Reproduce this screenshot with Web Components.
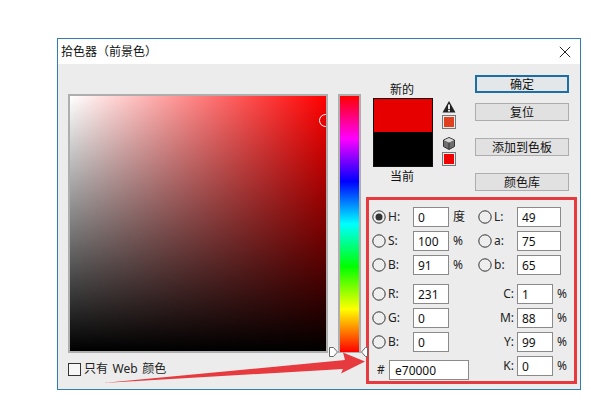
<!DOCTYPE html>
<html lang="zh"><head><meta charset="utf-8"><title>拾色器</title>
<style>
html,body{margin:0;background:#fff;}
body{width:591px;height:412px;overflow:hidden;padding:38px 0 0 57px;box-sizing:border-box;position:relative;font:12px/16px "Noto Sans","Noto Sans CJK SC",sans-serif;color:#111;}
</style></head><body>
<cp-dialog heading="拾色器（前景色）">
  <div slot="left" style="display:contents">
    <cp-field-square></cp-field-square>
    <cp-hue></cp-hue>
  </div>
  <cp-check slot="check">只有 Web 颜色</cp-check>
  <cp-preview slot="preview"></cp-preview>
  <cp-btn slot="btn" primary>确定</cp-btn>
  <cp-btn slot="btn" style="margin-top:10px">复位</cp-btn>
  <cp-btn slot="btn" style="margin-top:17px">添加到色板</cp-btn>
  <cp-btn slot="btn" style="margin-top:17px">颜色库</cp-btn>
  <cp-values slot="values"></cp-values>
</cp-dialog>
<cp-arrow></cp-arrow>
<script>
function def(name,css,html){
  customElements.define(name,class extends HTMLElement{
    connectedCallback(){
      if(this.shadowRoot)return;
      const r=this.attachShadow({mode:'open'});
      r.innerHTML='<style>'+css+'</style>'+(typeof html==='function'?html(this):html);
    }
  });
}
def('cp-dialog',`
:host{display:block;width:524px;border:1px solid #2f7fb5;box-sizing:border-box;background:#ececec}
.title{height:25px;background:#fff;display:flex;align-items:center;justify-content:space-between;padding:0 9px 0 3px;font-size:12px;line-height:25px;color:#111}
.title svg{display:block}
.body{display:flex;gap:5px;padding:0 0 5px 10px}
.left{padding-top:30px;width:293px}
.row{display:flex;gap:10px}
.right{padding-top:11px;width:211px}
.top{display:flex;height:122px}
.btns{margin-left:19px;width:94px;display:flex;flex-direction:column}
`,h=>`<div class="title"><span>${h.getAttribute('heading')}</span><svg width="12" height="12" viewBox="0 0 12 12"><path d="M.8.8l10.4 10.4M11.2.8L.8 11.2" stroke="#222" stroke-width="1" fill="none"/></svg></div>
<div class="body"><div class="left"><div class="row"><slot name="left"></slot></div><slot name="check"></slot></div>
<div class="right"><div class="top"><slot name="preview"></slot><div class="btns"><slot name="btn"></slot></div></div><slot name="values"></slot></div></div>`);

def('cp-field-square',`
:host{display:block;position:relative;width:260px;height:259px;box-sizing:border-box;border:2px solid #aeaeae;background:linear-gradient(to bottom,rgba(0,0,0,0),#000),linear-gradient(to right,#fff,#f00)}
.clip{position:absolute;inset:0;overflow:hidden}
.ring{position:absolute;left:249px;top:18px;width:13px;height:13px;box-sizing:border-box;border:1.5px solid #fff;border-radius:50%}
.tri{position:absolute;left:259px;top:251px}
`,`<div class="clip"><div class="ring"></div></div><svg class="tri" width="9" height="10" viewBox="0 0 9 10"><path d="M.5.5H4.500L8.500 5 4.500 9.500H.5z" fill="#fff" stroke="#666" stroke-width="1"/></svg>`);

def('cp-hue',`
:host{display:block;position:relative;width:23px;height:259px;box-sizing:border-box;border:2px solid #aeaeae;border-bottom-width:1px;background:linear-gradient(to bottom,#f00,#f0f 16.67%,#00f 33.33%,#0ff 50%,#0f0 66.67%,#ff0 83.33%,#f00)}
svg{position:absolute;left:21px;top:251px}
`,`<svg width="7" height="10" viewBox="0 0 7 10"><path d="M6.500.5H4.500L.5 5l4 4.500h2z" fill="#fff" stroke="#666" stroke-width="1"/></svg>`);

def('cp-check',`
:host{display:flex;align-items:center;margin-top:9px;height:14px;gap:3px;font-size:12px;line-height:14px;color:#222;word-spacing:1.5px}
i{display:block;width:13px;height:13px;box-sizing:border-box;border:1px solid #333;background:#f6f6f6}
`,`<i></i><slot></slot>`);

def('cp-preview',`
:host{display:flex;margin-left:7px}
.c{width:60px;padding-top:7px;text-align:center;font-size:12px;line-height:16px}
.t{padding-right:2px}
.sw{height:69px;box-sizing:border-box;border:1px solid #111;background:linear-gradient(#e70000 0 50%,#000 50%)}
.l2{margin-top:2px}
.i{margin-left:9px;width:14px;padding-top:26px;display:flex;flex-direction:column}
.i svg{display:block}
.s{width:14px;height:14px;box-sizing:border-box;border:1px solid #777;box-shadow:inset 0 0 0 1px #eee}
`,`<div class="c"><div class="t">新的</div><div class="sw"></div><div class="l2 t">当前</div></div>
<div class="i"><svg width="14" height="12" viewBox="0 0 14 12"><path d="M7 0L13.500 11.500H.5z" fill="#222"/><path d="M6.100 3.500h1.800v4.400H6.100zM6.100 8.800h1.800v1.700H6.100z" fill="#fff"/></svg>
<div class="s" style="margin-top:2px;background:#e0401e"></div>
<svg style="margin-top:8px" width="14" height="13" viewBox="0 0 14 13"><path d="M7 .5L12.500 3V9.500L7 12.500 1.500 9.500V3z" fill="#6f6f6f" stroke="#333" stroke-width="1" stroke-linejoin="round"/><path d="M2 3.200L7 1 12 3.200 7 5.600z" fill="#d8d8d8"/><path d="M7 5.800V12" stroke="#333"/></svg>
<div class="s" style="margin-top:2px;background:#f00000"></div></div>`);

def('cp-btn',`
:host{display:block;height:18px;box-sizing:border-box;border:1px solid #adadad;background:#e1e1e1;text-align:center;font-size:12px;line-height:16px;padding-top:1px;color:#111}
:host([primary]){border:2px solid #1c6ea8;padding-top:0;background:#e4e7ea}
`,`<slot></slot>`);

const radio=on=>`<svg width="14" height="14" viewBox="0 0 14 14" style="display:block;flex:none"><circle cx="7" cy="7" r="6.200" fill="#eee" stroke="#333"/>${on?'<circle cx="7" cy="7" r="3.500" fill="#333"/>':''}</svg>`;
def('cp-f',`
:host{display:flex;align-items:center;height:20px;font-size:12px;line-height:16px;color:#222}
.l{width:27px;padding-left:2px;box-sizing:border-box}
.v{width:36px;height:20px;box-sizing:border-box;border:1px solid #8a8a8a;background:#fff;padding-left:4px;line-height:19px;color:#111}
.u{margin-left:4px}
:host([wide]) .v{width:44px}
:host([wide]) .l{width:25px}
:host([cmyk]) .l{width:39px;padding:0 3px 0 0;text-align:right}
`,h=>{
  const g=a=>h.getAttribute(a)||'';
  return `${h.hasAttribute('cmyk')?'':radio(h.hasAttribute('on'))}<span class="l">${g('k')}</span><span class="v">${g('v')}</span>${g('u')?`<span class="u">${g('u')}</span>`:''}`;
});
def('cp-values',`
:host{display:grid;grid-template-columns:106px 1fr;row-gap:8px;width:211px;height:187px;box-sizing:border-box;border:3px solid #e73a3f;padding:7px 0 0 3px;font-size:12px}
.col{display:flex;flex-direction:column;gap:4px}
.hex{display:flex;align-items:center;margin-top:4px;height:20px;color:#222}
.hex b{font-weight:400;margin-left:5px;width:12px}
.hex span{width:80px;height:20px;box-sizing:border-box;border:1px solid #8a8a8a;background:#fff;padding-left:5px;line-height:19px;color:#111}
`,`<div class="col"><cp-f on k="H:" v="0" u="度"></cp-f><cp-f k="S:" v="100" u="%"></cp-f><cp-f k="B:" v="91" u="%"></cp-f></div>
<div class="col"><cp-f wide k="L:" v="49"></cp-f><cp-f wide k="a:" v="75"></cp-f><cp-f wide k="b:" v="65"></cp-f></div>
<div class="col"><cp-f k="R:" v="231"></cp-f><cp-f k="G:" v="0"></cp-f><cp-f k="B:" v="0"></cp-f><div class="hex"><b>#</b><span>e70000</span></div></div>
<div class="col"><cp-f cmyk k="C:" v="1" u="%"></cp-f><cp-f cmyk k="M:" v="88" u="%"></cp-f><cp-f cmyk k="Y:" v="99" u="%"></cp-f><cp-f cmyk k="K:" v="0" u="%"></cp-f></div>`);

def('cp-arrow',`:host{position:absolute;left:0;top:0;width:591px;height:412px;pointer-events:none}svg{display:block}`,
`<svg width="591" height="412" viewBox="0 0 591 412"><path d="M103 383L345 360L343 352.500L365 361.500L341 373.500L343 369Z" fill="#e73a3f"/></svg>`);
</script>
</body></html>
